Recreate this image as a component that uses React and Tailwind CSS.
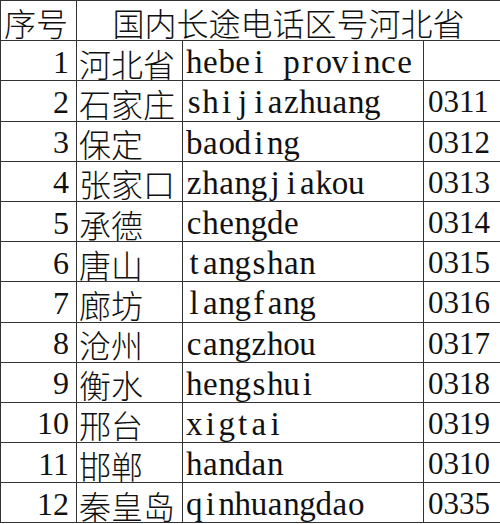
import React from "react";

const rows = [
  ["1", "河北省", "hebei province", ""],
  ["2", "石家庄", "shijiazhuang", "0311"],
  ["3", "保定", "baoding", "0312"],
  ["4", "张家口", "zhangjiakou", "0313"],
  ["5", "承德", "chengde", "0314"],
  ["6", "唐山", "tangshan", "0315"],
  ["7", "廊坊", "langfang", "0316"],
  ["8", "沧州", "cangzhou", "0317"],
  ["9", "衡水", "hengshui", "0318"],
  ["10", "邢台", "xigtai", "0319"],
  ["11", "邯郸", "handan", "0310"],
  ["12", "秦皇岛", "qinhuangdao", "0335"],
];

function MonoSerif({ text }) {
  return (
    <span className="inline-flex">
      {text.split("").map((c, i) => (
        <span key={i} className="inline-block w-[16.2px] text-center">
          {c === " " ? "\u00a0" : c}
        </span>
      ))}
    </span>
  );
}

const cell =
  "border-r-[1.5px] border-b-[1.5px] border-[#333] flex items-center whitespace-nowrap";
const cjk = "font-['Noto_Sans_CJK_SC',sans-serif] font-light text-[32px] leading-none";
const serif = "font-['Liberation_Serif','Noto_Sans_CJK_SC',serif] leading-none";

export default function App() {
  return (
    <div className="w-[500px] h-[524px] bg-white overflow-hidden">
      <div className="grid grid-cols-[76px_106px_241px_77px] auto-rows-[40.2px] border-l-[1.5px] border-t-[1.5px] border-[#333] text-[#111] w-[500px]">
        <div className={`${cell} ${cjk} pl-[3px] pt-[3px]`}>序号</div>
        <div className={`${cell} ${cjk} col-span-3 justify-center pt-[3px]`}>
          国内长途电话区号河北省
        </div>
        {rows.map((r) => (
          <React.Fragment key={r[0]}>
            <div className={`${cell} ${serif} justify-end pr-[7px] pt-[2px] text-[32px]`}>
              {r[0]}
            </div>
            <div className={`${cell} ${cjk} pl-[2px] pt-[4px]`}>{r[1]}</div>
            <div className={`${cell} ${serif} pl-[3px] pt-[4px] text-[33px]`}>
              <MonoSerif text={r[2]} />
            </div>
            <div className={`${cell} ${serif} pl-[4px] pt-[2px] text-[31px]`}>
              {r[3]}
            </div>
          </React.Fragment>
        ))}
      </div>
    </div>
  );
}
